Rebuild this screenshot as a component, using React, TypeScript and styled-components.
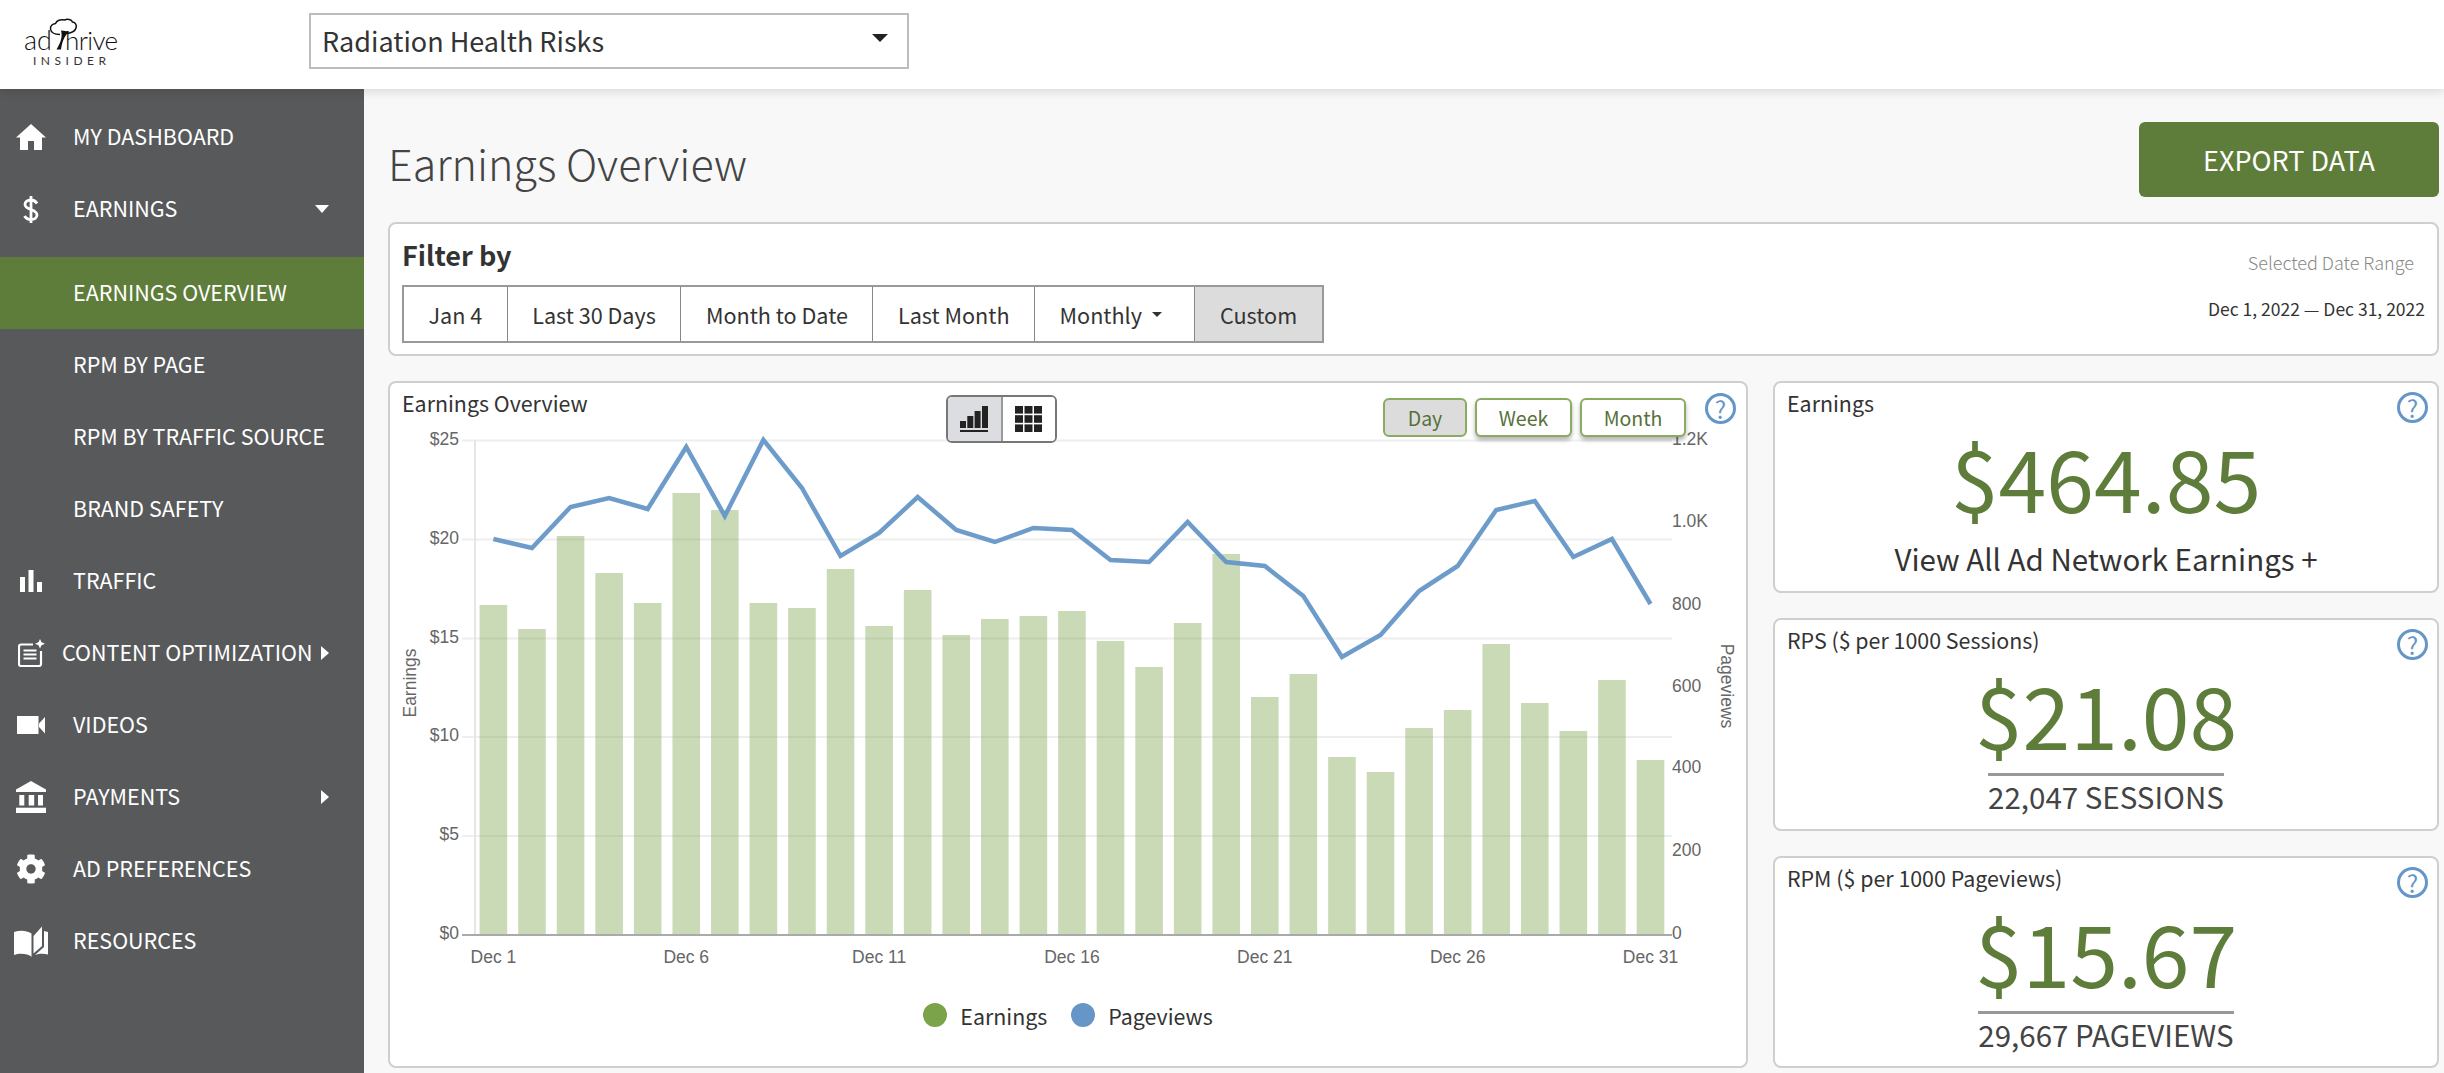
import React from "react";
import styled, { createGlobalStyle } from "styled-components";
import { FaCog } from "react-icons/fa";

const GlobalStyle = createGlobalStyle`
    html, body {
        margin: 0;
        padding: 0;
        background: #f8f8f8;
    }
    * {
        box-sizing: border-box;
    }
    body {
        font-family: "Noto Sans CJK SC", "Noto Sans", sans-serif;
        color: #333;
    }
`;

const Page = styled.div`
    width: 2444px;
    height: 1073px;
    overflow: hidden;
    display: flex;
    flex-direction: column;
`;

const TopBar = styled.header`
    height: 89px;
    flex: none;
    background: #fff;
    display: flex;
    align-items: center;
    padding-left: 20px;
    position: relative;
    z-index: 2;
    box-shadow: 0 2px 10px rgba(0, 0, 0, 0.14);
`;

const LogoBox = styled.svg`
    width: 100px;
    height: 56px;
    flex: none;
    overflow: visible;
`;

const SiteSelect = styled.div`
    width: 600px;
    height: 56px;
    margin-left: 189px;
    margin-top: -7px;
    background: #fff;
    border: 2px solid #bdbdbd;
    display: flex;
    align-items: center;
    justify-content: space-between;
    padding: 0 19px 0 11px;
    font-size: 27px;
    line-height: 36px;
    color: #333;
`;

const SelectCaret = styled.span`
    width: 0;
    height: 0;
    margin-top: -6px;
    border-left: 8px solid transparent;
    border-right: 8px solid transparent;
    border-top: 8px solid #222;
`;

const Body = styled.div`
    flex: 1;
    display: flex;
    min-height: 0;
`;

const Sidebar = styled.nav`
    width: 364px;
    flex: none;
    background: #58595b;
    padding-top: 12px;
    display: flex;
    flex-direction: column;
`;

const NavRow = styled.div<{ $active?: boolean; $gapAfter?: boolean }>`
    height: 72px;
    flex: none;
    display: flex;
    align-items: center;
    padding-right: 35px;
    color: #fff;
    font-size: 21.5px;
    line-height: 30px;
    background: ${(props) => (props.$active ? "#5e7d3a" : "transparent")};
    margin-bottom: ${(props) => (props.$gapAfter ? "12px" : "0")};
`;

const NavIcon = styled.span`
    width: 62px;
    flex: none;
    display: flex;
    justify-content: center;
    align-items: center;
    color: #fff;
`;

const NavLabel = styled.span<{ $tight?: boolean }>`
    margin-left: ${(props) => (props.$tight ? "0" : "11px")};
    margin-top: -3px;
    white-space: nowrap;
`;

const ArrowRight = styled.span`
    margin-left: auto;
    width: 0;
    height: 0;
    border-top: 7px solid transparent;
    border-bottom: 7px solid transparent;
    border-left: 8px solid #fff;
`;

const ArrowDown = styled.span`
    margin-left: auto;
    width: 0;
    height: 0;
    border-left: 7px solid transparent;
    border-right: 7px solid transparent;
    border-top: 8px solid #fff;
`;

const Main = styled.main`
    flex: 1;
    min-width: 0;
    padding: 33px 5px 0 24px;
`;

const TitleRow = styled.div`
    height: 75px;
    display: flex;
    align-items: center;
    justify-content: space-between;
`;

const PageTitle = styled.h1`
    margin: 4px 0 0 0;
    font-size: 43px;
    line-height: 60px;
    font-weight: 300;
    color: #444;
`;

const ExportButton = styled.button`
    width: 300px;
    height: 75px;
    border: none;
    border-radius: 6px;
    background: #5e7d3a;
    color: #fff;
    font-family: inherit;
    font-size: 27px;
    cursor: pointer;
`;

const Card = styled.section`
    background: #fff;
    border: 2px solid #cfcfcf;
    border-radius: 8px;
`;

const FilterCard = styled(Card)`
    height: 134px;
    margin-top: 25px;
    padding: 12px 12px 0 12px;
    display: flex;
    justify-content: space-between;
`;

const FilterTitle = styled.div`
    font-size: 27px;
    line-height: 38px;
    font-weight: 600;
    color: #333;
`;

const ButtonGroup = styled.div`
    display: flex;
    height: 58px;
    margin-top: 11px;
    border: 2px solid #999;
`;

const FilterButton = styled.div<{ $selected?: boolean }>`
    height: 100%;
    display: flex;
    align-items: center;
    gap: 10px;
    padding: 0 24.5px;
    font-size: 21.6px;
    color: #333;
    background: ${(props) => (props.$selected ? "#dcdcdc" : "#fff")};
    & + & {
        border-left: 1px solid #888;
    }
`;

const SmallCaret = styled.span`
    width: 0;
    height: 0;
    margin-right: 8px;
    border-left: 5.5px solid transparent;
    border-right: 5.5px solid transparent;
    border-top: 5px solid #333;
`;

const RangeBox = styled.div`
    display: flex;
    flex-direction: column;
    align-items: flex-end;
    padding-top: 13px;
`;

const RangeLabel = styled.div`
    font-size: 18px;
    line-height: 26px;
    font-weight: 300;
    color: #888;
    margin-right: 11px;
`;

const RangeValue = styled.div`
    margin-top: 21px;
    font-size: 17.5px;
    line-height: 26px;
    color: #333;
`;

const Columns = styled.div`
    margin-top: 25px;
    height: 687px;
    display: grid;
    grid-template-columns: 1360px 1fr;
    column-gap: 25px;
`;

const ChartCard = styled(Card)`
    display: flex;
    flex-direction: column;
`;

const ChartHead = styled.div`
    height: 50px;
    flex: none;
    position: relative;
    z-index: 1;
    display: flex;
    padding: 5px 10px 0 12px;
`;

const CardLabel = styled.div`
    font-size: 21.4px;
    line-height: 30px;
    color: #333;
    white-space: nowrap;
`;

const ViewToggle = styled.div`
    position: absolute;
    left: 556px;
    top: 12px;
    width: 111px;
    height: 48px;
    display: flex;
    border: 2px solid #777;
    border-radius: 6px;
    overflow: hidden;
    background: #fff;
`;

const ToggleCell = styled.div<{ $on?: boolean }>`
    flex: 1;
    display: flex;
    align-items: center;
    justify-content: center;
    background: ${(props) => (props.$on ? "#dcdde0" : "#fff")};
    & + & {
        border-left: 2px solid #999;
    }
`;

const PeriodGroup = styled.div`
    margin-left: auto;
    margin-right: 19px;
    margin-top: 10px;
    display: flex;
    gap: 8px;
`;

const PeriodButton = styled.div<{ $on?: boolean; $w: number }>`
    width: ${(props) => props.$w}px;
    height: 39px;
    display: flex;
    align-items: center;
    justify-content: center;
    font-size: 19.5px;
    color: #56703a;
    border: 2px solid #8aab62;
    border-radius: 6px;
    background: ${(props) => (props.$on ? "#dcdcdc" : "#fff")};
    box-shadow: ${(props) => (props.$on ? "none" : "0 3px 4px rgba(0,0,0,.3)")};
`;

const HelpBadge = styled.span`
    width: 31px;
    height: 31px;
    flex: none;
    margin-top: 5px;
    border: 3px solid #6596c7;
    border-radius: 50%;
    background: #fff;
    color: #6596c7;
    display: flex;
    align-items: center;
    justify-content: center;
    font-size: 24px;
    line-height: 25px;
`;

const ChartSvg = styled.svg`
    display: block;
    flex: none;
    width: 1356px;
    height: 540px;
    overflow: visible;
    font-family: "Liberation Sans", Arial, sans-serif;
`;

const Legend = styled.div`
    height: 84px;
    display: flex;
    align-items: center;
    justify-content: center;
    font-size: 21.4px;
    color: #333;
`;

const LegendDot = styled.span<{ $color: string }>`
    width: 24px;
    height: 24px;
    border-radius: 50%;
    background: ${(props) => props.$color};
    margin-right: 13px;
`;

const LegendItem = styled.span`
    margin-right: 24px;
    &:last-child {
        margin-right: 0;
    }
`;

const StatColumn = styled.div`
    display: flex;
    flex-direction: column;
    gap: 25px;
`;

const StatCard = styled(Card)`
    flex: 1;
    position: relative;
    padding: 5px 12px 0;
    display: flex;
    flex-direction: column;
    align-items: center;
`;

const StatLabel = styled(CardLabel)`
    align-self: flex-start;
`;

const StatHelp = styled(HelpBadge)`
    position: absolute;
    margin-top: 0;
    top: 9px;
    right: 9px;
`;

const StatValue = styled.div`
    margin-top: 3px;
    font-size: 86px;
    line-height: 110px;
    color: #5e7d3a;
    white-space: nowrap;
`;

const StatLink = styled.div`
    margin-top: 7px;
    font-size: 29.5px;
    line-height: 40px;
    color: #333;
`;

const StatCount = styled.div`
    margin-top: 5px;
    border-top: 3px solid #999;
    font-size: 29.5px;
    line-height: 40px;
    color: #444;
`;

// bar tops and line points read off the reference, in page pixels
const barTops = [
    604, 628, 535, 572, 602, 492, 509, 602, 607, 568, 625, 589, 634, 618, 615, 610,
    640, 666, 622, 553, 696, 673, 756, 771, 727, 709, 643, 702, 730, 679, 759,
];
const lineYs = [
    538, 547, 506, 497, 508, 446, 515, 439, 487, 555, 532, 496, 529, 541, 527, 529,
    559, 561, 521, 561, 565, 595, 656, 634, 590, 565, 509, 500, 556, 538, 603,
];

const barX = (i: number) => 493.4 + 38.57 * i;

const leftTicks = [
    { label: "$25", grid: 439.5, y: 438 },
    { label: "$20", grid: 538.5, y: 537 },
    { label: "$15", grid: 637.5, y: 636 },
    { label: "$10", grid: 736, y: 734 },
    { label: "$5", grid: 835, y: 833 },
    { label: "$0", grid: 934, y: 932 },
];
const rightTicks = [
    { label: "1.2K", y: 438 },
    { label: "1.0K", y: 520 },
    { label: "800", y: 603 },
    { label: "600", y: 685 },
    { label: "400", y: 766 },
    { label: "200", y: 849 },
    { label: "0", y: 932 },
];
const dayTicks = [
    { label: "Dec 1", i: 0 },
    { label: "Dec 6", i: 5 },
    { label: "Dec 11", i: 10 },
    { label: "Dec 16", i: 15 },
    { label: "Dec 21", i: 20 },
    { label: "Dec 26", i: 25 },
    { label: "Dec 31", i: 30 },
];

function Logo() {
    return (
        <LogoBox viewBox="20 16.5 100 56">
            <path
                d="M60 34c-5 0-9-2-9.500-5.500-.5-3 2-5 5-5.500 1-3 5-4.500 9-3.500 3-1.500 7-.5 8 2 3 .5 4.500 3 3.500 6-1 3.500-5 5-9 5.500"
                fill="none"
                stroke="#111"
                strokeWidth="1.500"
            />
            <path d="M61 30c2 7-1 13-4.500 19H61c1-7 3-13 8-18z" fill="#111" />
            <text x="24" y="49" fontFamily="Lato, sans-serif" fontWeight="300" fontSize="27" fill="#111">
                ad
            </text>
            <text x="65" y="49" fontFamily="Lato, sans-serif" fontWeight="300" fontSize="26" letterSpacing="-0.6" fill="#111">
                hrive
            </text>
            <text x="33" y="64" fontFamily="Lato, sans-serif" fontSize="12" letterSpacing="4.500" fill="#333">
                INSIDER
            </text>
        </LogoBox>
    );
}

function HomeIcon() {
    return (
        <svg width="30" height="26" viewBox="0 0 30 26" fill="#fff">
            <path d="M15 0l15 13.500h-4V26h-8v-9h-6v9H4V13.500H0z" />
        </svg>
    );
}

function DollarIcon() {
    return (
        <svg width="16" height="27" viewBox="0 0 16 27" fill="none" stroke="#fff" strokeWidth="2.800">
            <path d="M14 7.500C12.500 5 10.500 4 8 4 4.500 4 2 5.800 2 8.500c0 6 12 4 12 10.500 0 2.800-2.500 4.500-6 4.500-3 0-5-1-6.500-3.500M8 0v27" />
        </svg>
    );
}

function BarsIcon() {
    return (
        <svg width="22" height="22" viewBox="0 0 22 22" fill="#fff">
            <rect x="0" y="7" width="5" height="15" />
            <rect x="8.500" y="0" width="5" height="22" />
            <rect x="17" y="12" width="5" height="10" />
        </svg>
    );
}

function ContentIcon() {
    return (
        <svg width="27" height="28" viewBox="0 0 27 28" fill="none">
            <path d="M15 5.500H3a2 2 0 0 0-2 2v17.500a2 2 0 0 0 2 2h18a2 2 0 0 0 2-2V12" stroke="#fff" strokeWidth="2.200" />
            <path d="M5.500 11.500h13M5.500 15.500h13M5.500 19.500h13" stroke="#fff" strokeWidth="2.200" />
            <path d="M22 0l1.500 3.300L27 4.700l-3.500 1.500L22 9.500l-1.500-3.300L17 4.700l3.500-1.400z" fill="#fff" />
        </svg>
    );
}

function VideoIcon() {
    return (
        <svg width="28" height="18" viewBox="0 0 28 18" fill="#fff">
            <rect width="21.500" height="18" />
            <path d="M22 7.500L28 1v16.500L22 11z" />
        </svg>
    );
}

function BankIcon() {
    return (
        <svg width="30" height="32" viewBox="0 0 30 32" fill="#fff">
            <path d="M15 0l15 8.500v2.500H0V8.500z" />
            <rect x="3.300" y="14" width="5" height="10.500" />
            <rect x="12.700" y="14" width="5.500" height="10.500" />
            <rect x="22" y="14" width="5" height="10.500" />
            <rect x="0" y="26.700" width="30" height="5.300" />
        </svg>
    );
}

function BookIcon() {
    return (
        <svg width="34" height="31" viewBox="0 0 34 31" fill="#fff">
            <path d="M0 6c6-2 12-2 17.500 1.500V31c-1-1.500-2.500-2-4.500-2.500-4-1-9-1-13 .500z" />
            <path d="M19.500 10L28 .500V20l-8.500 7.500z" />
            <path d="M30 5v16L21 29c4-1.500 9-1.500 13-.500V6z" />
        </svg>
    );
}

function SignalIcon() {
    return (
        <svg width="28" height="26" viewBox="0 0 28 26" fill="#222">
            <rect x="0" y="15" width="6" height="7" />
            <rect x="7.300" y="10" width="6" height="12" />
            <rect x="14.600" y="5" width="6" height="17" />
            <rect x="22" y="0" width="6" height="22" />
            <rect x="0" y="24" width="28" height="2" />
        </svg>
    );
}

function GridIcon() {
    return (
        <svg width="27" height="26" viewBox="0 0 27 26" fill="#222">
            {[0, 9.500, 19].map((x) =>
                [0, 9.200, 18.400].map((y) => <rect key={`${x}-${y}`} x={x} y={y} width="8" height="7.600" />)
            )}
        </svg>
    );
}

function OverviewChart() {
    const linePoints = lineYs.map((y, i) => `${barX(i)},${y}`).join(" ");
    return (
        <ChartSvg viewBox="390 432 1356 540">
            {leftTicks.slice(0, 5).map((t) => (
                <line key={t.label} x1="462" x2="1672" y1={t.grid} y2={t.grid} stroke="#eee" strokeWidth="2" />
            ))}
            <line x1="475" x2="475" y1="439" y2="934" stroke="#e6e6e6" strokeWidth="2" />
            {barTops.map((top, i) => (
                <rect key={i} x={barX(i) - 13.800} y={top} width="27.600" height={934 - top} fill="#7aa34a" fillOpacity="0.4" />
            ))}
            <line x1="462" x2="1672" y1="934" y2="934" stroke="#aaa" strokeWidth="2" />
            <polyline points={linePoints} fill="none" stroke="#6596c7" strokeOpacity="0.95" strokeWidth="4.500" strokeLinejoin="miter" />
            <g fontSize="17.500" fill="#666">
                {leftTicks.map((t) => (
                    <text key={t.label} x="459" y={t.y} textAnchor="end" dominantBaseline="central">
                        {t.label}
                    </text>
                ))}
                {rightTicks.map((t) => (
                    <text key={t.label} x="1672" y={t.y} dominantBaseline="central">
                        {t.label}
                    </text>
                ))}
                {dayTicks.map((t) => (
                    <text key={t.label} x={barX(t.i)} y="956" textAnchor="middle" dominantBaseline="central">
                        {t.label}
                    </text>
                ))}
                <text transform="translate(410 682) rotate(-90)" textAnchor="middle" dominantBaseline="central">
                    Earnings
                </text>
                <text transform="translate(1727 685) rotate(90)" textAnchor="middle" dominantBaseline="central">
                    Pageviews
                </text>
            </g>
        </ChartSvg>
    );
}

const navItems = [
    { label: "MY DASHBOARD", icon: <HomeIcon /> },
    { label: "EARNINGS", icon: <DollarIcon />, down: true, gapAfter: true },
    { label: "EARNINGS OVERVIEW", active: true },
    { label: "RPM BY PAGE" },
    { label: "RPM BY TRAFFIC SOURCE" },
    { label: "BRAND SAFETY" },
    { label: "TRAFFIC", icon: <BarsIcon /> },
    { label: "CONTENT OPTIMIZATION", icon: <ContentIcon />, right: true, tight: true },
    { label: "VIDEOS", icon: <VideoIcon /> },
    { label: "PAYMENTS", icon: <BankIcon />, right: true },
    { label: "AD PREFERENCES", icon: <FaCog size={30} /> },
    { label: "RESOURCES", icon: <BookIcon /> },
];

const filters = ["Jan 4", "Last 30 Days", "Month to Date", "Last Month"];

export default function App() {
    return (
        <Page>
            <GlobalStyle />
            <TopBar>
                <Logo />
                <SiteSelect>
                    Radiation Health Risks
                    <SelectCaret />
                </SiteSelect>
            </TopBar>
            <Body>
                <Sidebar>
                    {navItems.map((item) => (
                        <NavRow key={item.label} $active={item.active} $gapAfter={item.gapAfter}>
                            <NavIcon>{item.icon}</NavIcon>
                            <NavLabel $tight={item.tight}>{item.label}</NavLabel>
                            {item.right && <ArrowRight />}
                            {item.down && <ArrowDown />}
                        </NavRow>
                    ))}
                </Sidebar>
                <Main>
                    <TitleRow>
                        <PageTitle>Earnings Overview</PageTitle>
                        <ExportButton>EXPORT DATA</ExportButton>
                    </TitleRow>
                    <FilterCard>
                        <div>
                            <FilterTitle>Filter by</FilterTitle>
                            <ButtonGroup>
                                {filters.map((f) => (
                                    <FilterButton key={f}>{f}</FilterButton>
                                ))}
                                <FilterButton>
                                    Monthly
                                    <SmallCaret />
                                </FilterButton>
                                <FilterButton $selected>Custom</FilterButton>
                            </ButtonGroup>
                        </div>
                        <RangeBox>
                            <RangeLabel>Selected Date Range</RangeLabel>
                            <RangeValue>Dec 1, 2022 — Dec 31, 2022</RangeValue>
                        </RangeBox>
                    </FilterCard>
                    <Columns>
                        <ChartCard>
                            <ChartHead>
                                <CardLabel>Earnings Overview</CardLabel>
                                <ViewToggle>
                                    <ToggleCell $on>
                                        <SignalIcon />
                                    </ToggleCell>
                                    <ToggleCell>
                                        <GridIcon />
                                    </ToggleCell>
                                </ViewToggle>
                                <PeriodGroup>
                                    <PeriodButton $on $w={84}>Day</PeriodButton>
                                    <PeriodButton $w={97}>Week</PeriodButton>
                                    <PeriodButton $w={106}>Month</PeriodButton>
                                </PeriodGroup>
                                <HelpBadge>?</HelpBadge>
                            </ChartHead>
                            <OverviewChart />
                            <Legend>
                                <LegendDot $color="#7aa34a" />
                                <LegendItem>Earnings</LegendItem>
                                <LegendDot $color="#6596c7" />
                                <LegendItem>Pageviews</LegendItem>
                            </Legend>
                        </ChartCard>
                        <StatColumn>
                            <StatCard>
                                <StatLabel>Earnings</StatLabel>
                                <StatHelp>?</StatHelp>
                                <StatValue>$464.85</StatValue>
                                <StatLink>View All Ad Network Earnings +</StatLink>
                            </StatCard>
                            <StatCard>
                                <StatLabel>RPS ($ per 1000 Sessions)</StatLabel>
                                <StatHelp>?</StatHelp>
                                <StatValue>$21.08</StatValue>
                                <StatCount>22,047 SESSIONS</StatCount>
                            </StatCard>
                            <StatCard>
                                <StatLabel>RPM ($ per 1000 Pageviews)</StatLabel>
                                <StatHelp>?</StatHelp>
                                <StatValue>$15.67</StatValue>
                                <StatCount>29,667 PAGEVIEWS</StatCount>
                            </StatCard>
                        </StatColumn>
                    </Columns>
                </Main>
            </Body>
        </Page>
    );
}
